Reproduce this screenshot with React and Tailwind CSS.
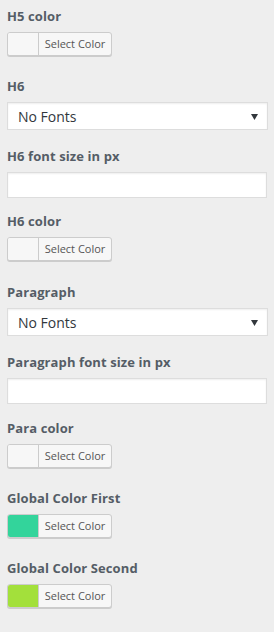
import React from 'react';

const ColorButton = ({ color }) => (
  <button
    type="button"
    className="flex h-6 w-[105px] items-stretch overflow-hidden rounded-[3px] border border-[#cccccc] bg-[#f7f7f7] shadow-[0_1px_0_#cccccc]"
  >
    <span
      className="w-[31px] shrink-0 border-r border-[#cccccc]"
      style={{ backgroundColor: color }}
    />
    <span className="flex flex-1 items-center justify-center text-[11px] text-[#555555]">
      Select Color
    </span>
  </button>
);

const FontSelect = () => (
  <div className="relative w-[261px]">
    <select className="h-[28px] w-full appearance-none border border-[#dddddd] bg-white pl-[10px] text-[14px] text-[#32373c] shadow-[inset_0_1px_2px_rgba(0,0,0,0.07)] outline-none">
      <option>No Fonts</option>
    </select>
    <svg
      className="pointer-events-none absolute right-[10px] top-[12px]"
      width="7"
      height="6"
      viewBox="0 0 7 6"
    >
      <path d="M0 0 H7 L3.5 6 Z" fill="#32373c" />
    </svg>
  </div>
);

const TextInput = () => (
  <input
    type="text"
    className="block h-[26px] w-[260px] border border-[#dddddd] bg-white shadow-[inset_0_1px_2px_rgba(0,0,0,0.07)] outline-none"
  />
);

const Label = ({ children }) => (
  <div className="h-5 text-[13px] font-bold leading-5 tracking-[0.1px] text-[#555d66]">{children}</div>
);

const Field = ({ label, children, className }) => (
  <div className={className}>
    <Label>{label}</Label>
    <div className="mt-[6px]">{children}</div>
  </div>
);

export default function App() {
  return (
    <div
      className="h-[632px] w-[274px] bg-[#eeeeee] pl-[7px] pt-[6px]"
      style={{ fontFamily: '"Open Sans", "Noto Sans", sans-serif' }}
    >
      <Field label="H5 color">
        <ColorButton color="#f7f7f7" />
      </Field>

      <Field label="H6" className="mt-[20px]">
        <FontSelect />
      </Field>

      <Field label="H6 font size in px" className="mt-[16px]">
        <TextInput />
      </Field>

      <Field label="H6 color" className="mt-[13px]">
        <ColorButton color="#f7f7f7" />
      </Field>

      <Field label="Paragraph" className="mt-[21px]">
        <FontSelect />
      </Field>

      <Field label="Paragraph font size in px" className="mt-[16px]">
        <TextInput />
      </Field>

      <Field label="Para color" className="mt-[14px]">
        <ColorButton color="#f7f7f7" />
      </Field>

      <Field label="Global Color First" className="mt-[20px]">
        <ColorButton color="#33d49b" />
      </Field>

      <Field label="Global Color Second" className="mt-[20px]">
        <ColorButton color="#a3e03b" />
      </Field>
    </div>
  );
}
